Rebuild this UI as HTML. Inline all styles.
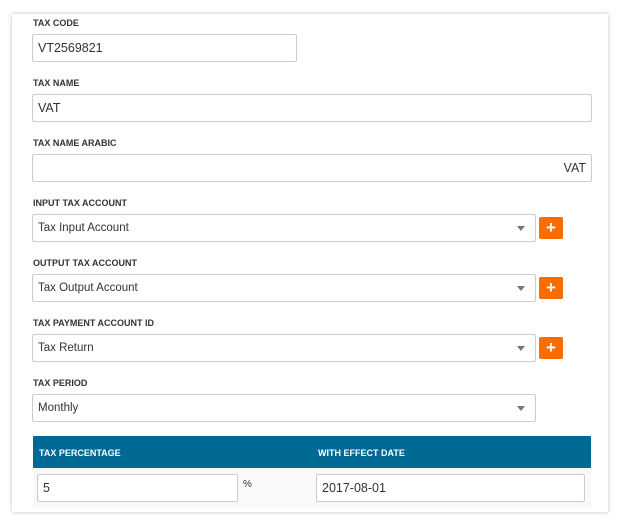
<!DOCTYPE html><html><head><style>
body{margin:0;width:622px;height:530px;background:#fff;font-family:"Liberation Sans",sans-serif;position:relative;overflow:hidden}
.card{position:absolute;left:12px;top:14px;width:596px;height:498px;background:#fff;box-shadow:0 0 4px rgba(0,0,0,.25)}
.l{position:absolute;left:33px;font-size:9px;font-weight:bold;color:#333}
.i{position:absolute;height:26px;border:1px solid #ccc;border-radius:2px;box-sizing:content-box;font-size:12.5px;color:#333;line-height:26px;padding:0 5px;background:#fff}
.s{font-size:11.5px}
.s:after{content:"";position:absolute;right:10px;top:11px;border:4px solid transparent;border-top:5px solid #777}
.p{position:absolute;left:539px;width:24px;height:22px;background:#f96d00;border-radius:2px;color:#fff;font-weight:bold;font-size:17px;text-align:center;line-height:22px}
</style></head><body>
<div class="card"></div>
<div class="l" style="top:18px">TAX CODE</div>
<div class="i" style="left:32px;top:34px;width:253px">VT2569821</div>
<div class="l" style="top:78px">TAX NAME</div>
<div class="i" style="left:32px;top:94px;width:548px">VAT</div>
<div class="l" style="top:138px">TAX NAME ARABIC</div>
<div class="i" style="left:32px;top:154px;width:548px;text-align:right">VAT</div>
<div class="l" style="top:198px">INPUT TAX ACCOUNT</div>
<div class="i s" style="left:32px;top:214px;width:492px">Tax Input Account</div>
<div class="p" style="top:217px">+</div>
<div class="l" style="top:258px">OUTPUT TAX ACCOUNT</div>
<div class="i s" style="left:32px;top:274px;width:492px">Tax Output Account</div>
<div class="p" style="top:277px">+</div>
<div class="l" style="top:318px">TAX PAYMENT ACCOUNT ID</div>
<div class="i s" style="left:32px;top:334px;width:492px">Tax Return</div>
<div class="p" style="top:337px">+</div>
<div class="l" style="top:378px">TAX PERIOD</div>
<div class="i s" style="left:32px;top:394px;width:492px">Monthly</div>
<div style="position:absolute;left:33px;top:436px;width:558px;height:32px;background:#006994;color:#fff;font-size:9px;font-weight:bold">
<span style="position:absolute;left:6px;top:12px">TAX PERCENTAGE</span><span style="position:absolute;left:285px;top:12px">WITH EFFECT DATE</span></div>
<div style="position:absolute;left:33px;top:468px;width:558px;height:40px;background:#f9f9f9"></div>
<div class="i" style="left:37px;top:474px;width:189px">5</div>
<div style="position:absolute;left:243px;top:479px;font-size:10px;color:#333">%</div>
<div class="i" style="left:316px;top:474px;width:257px">2017-08-01</div>
</body></html>
